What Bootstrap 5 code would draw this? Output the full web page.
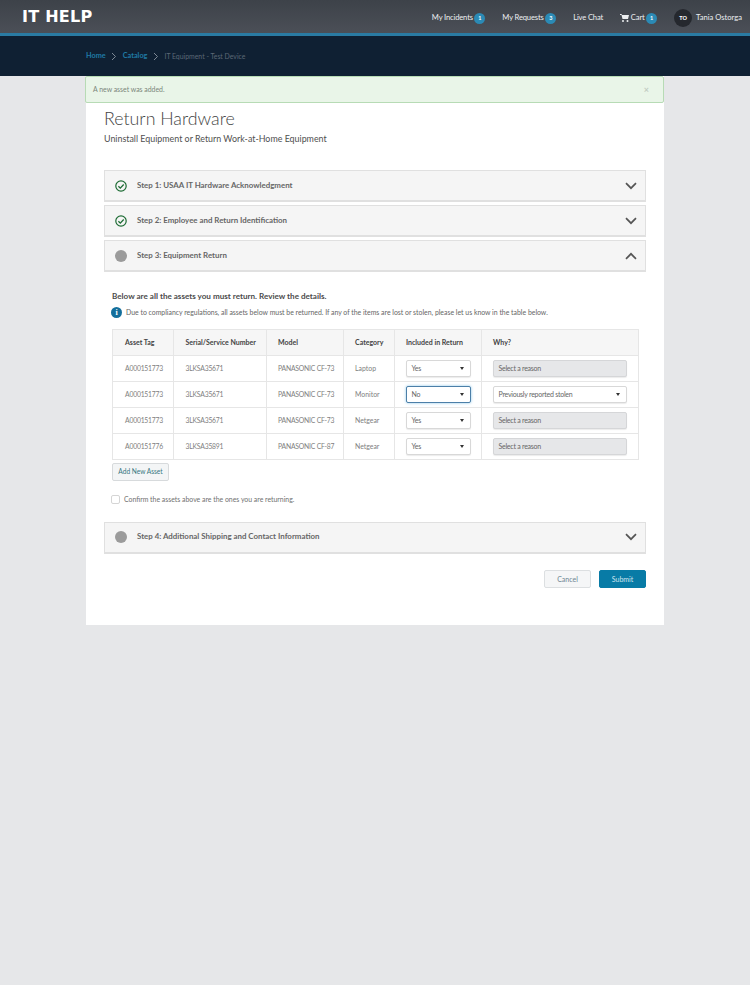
<!DOCTYPE html>
<html lang="en"><head><meta charset="utf-8"><title>Return Hardware</title>
<link href="https://cdn.jsdelivr.net/npm/bootstrap@5.3.0/dist/css/bootstrap.min.css" rel="stylesheet">
<style>
body{background:#e6e7e9;font-family:Lato,"Noto Sans",sans-serif;color:#555;font-size:8px;min-height:985px}
.topbar{height:36px;background:linear-gradient(#3d4249,#4b4f57);border-bottom:3px solid #2a7ba3;padding:0 8px 0 22px}
.brand{font-family:"DejaVu Sans",sans-serif;font-weight:700;font-size:15px;letter-spacing:.2px;color:#fff;transform:scaleX(1.07);transform-origin:left;line-height:1;margin-top:1px}
.navgroup{gap:17px;padding-top:3px}
.toplink{color:#eceef0;font-size:7.6px;white-space:nowrap;text-decoration:none;letter-spacing:-.15px}
.username{letter-spacing:0}
.count{display:inline-flex;align-items:center;justify-content:center;width:11px;height:11px;border-radius:50%;background:#2b8ab5;color:#fff;font-size:5.5px;font-weight:700;margin-left:1.5px;vertical-align:middle}
.avatar{width:18px;height:18px;border-radius:50%;background:#25282e;color:#fff;font-size:5.5px;font-weight:900}
.crumbbar{height:40px;background:#0f2033;padding-left:86px;font-size:6.9px;color:#5b6875}
.crumbbar a{color:#1f7aa5;font-weight:700;text-decoration:none;font-size:7.3px}
.crumbsvg{width:6px;height:9px;margin:0 5.5px}
.sheet{width:578px;margin:0 auto 0 86px;background:#fff;height:549px;position:relative}
.notice{position:absolute;left:-1px;top:0;width:579px;height:27px;background:#e9f5e8;border:1px solid #b7dbb5;border-radius:2px;padding:0 14px 0 7px;font-size:6.9px;color:#7b857b}
.notice-x{color:#c2ccc2;font-size:9px;font-weight:700;line-height:1}
.sheetbody{padding:31px 18px 0 18px}
.title{font-size:17.8px;font-weight:300;color:#444;margin:0;line-height:22px}
.subtitle{font-size:8.9px;color:#4f4f4f;margin:3px 0 24px;line-height:14px}
.step{height:32px;background:#f5f5f5;border:1px solid #e0e0e0;border-bottom-width:2px;margin-bottom:3px;padding:0 8px 0 10px}
.step-t{font-size:7.9px;font-weight:700;color:#666;margin-left:10px}
.dot{width:12px;height:12px;border-radius:50%;background:#9b9b9b;flex:none}
.stepsvg{width:12px;height:12px;flex:none}
.chev{width:12px;height:8px;margin-left:auto}
.panelbody{padding:15px 8px 0 8px}
.lede{font-size:8.1px;font-weight:700;color:#4b4b4b;line-height:12px;margin-bottom:5px}
.infoline{font-size:6.9px;color:#666;gap:4px;margin-bottom:11px;margin-left:-1px;line-height:11px}
.info{width:11px;height:11px;border-radius:50%;background:#146f9c;color:#fff;font:700 8px/11px "Liberation Serif",serif;text-align:center;flex:none}
.assets{width:526px;table-layout:fixed;margin:0;font-size:6.8px;letter-spacing:-.2px;border-color:#e6e6e6}
.assets th{background:#f6f6f6;color:#444;font-weight:700;height:26px;padding:0 0 0 12px;vertical-align:middle;font-size:7px;letter-spacing:0}
.assets td{height:26px;padding:0 0 0 12px;vertical-align:middle;background:#fff;color:#808080;white-space:nowrap}
.assets td.pad11,.assets th.pad11{padding-left:11px}
.assets td.wide{font-size:6.9px;letter-spacing:0}
.picker{height:16.5px;background:#fff;border:1px solid #d8d8d8;border-radius:2px;font-size:7px;letter-spacing:-.25px;color:#666;padding:0 6px 0 4.5px;box-shadow:0 1px 1px rgba(0,0,0,.08)}
.picker.sel{border-color:#4c7fa8;box-shadow:0 0 3px #8cc6e8}
.picker.off{background:#e6e7e9;border-color:#d5d6d8}
.caret{width:0;height:0;border:2.5px solid transparent;border-top:3.5px solid #333;border-bottom:0}
.w-inc{width:65px}.w-why{width:134px}
.addbtn{display:block;height:18px;width:57px;font-size:6.6px;color:#37767f;background:#f3f5f6;border:1px solid #d7dadc;border-radius:2px;margin-top:3px;padding:0}
.confirm{font-size:6.9px;color:#707070;gap:4px;margin:13px 0 17.5px -1px}
.box{width:9px;height:9px;border:1px solid #d5d5d5;border-radius:2px;background:#fff}
.actions{gap:8px;margin-top:16px}
.btn-quiet,.btn-go{height:18px;font-size:7px;border-radius:2px;padding:0}
.btn-quiet{width:47px;background:#f5f6f7;border:1px solid #dcdfe1;color:#6e8592}
.btn-go{width:47px;background:#087ba6;border:1px solid #087ba6;color:#cfe6ef}
</style></head><body>
<header class="topbar d-flex align-items-center justify-content-between">
  <div class="brand">IT HELP</div>
  <nav class="d-flex align-items-center navgroup">
    <a class="toplink" href="#">My Incidents<span class="count">1</span></a>
    <a class="toplink" href="#">My Requests<span class="count">3</span></a>
    <a class="toplink" href="#">Live Chat</a>
    <a class="toplink" href="#"><svg width="9" height="8" viewBox="0 0 18 16" fill="#eceef0"><path d="M0 0h3l1 2h14l-2 8H5L3 2H0zM6 12a2 2 0 1 1 0 4 2 2 0 0 1 0-4zm9 0a2 2 0 1 1 0 4 2 2 0 0 1 0-4z"/></svg> Cart<span class="count">1</span></a>
    <div class="d-flex align-items-center toplink username"><span class="avatar d-flex align-items-center justify-content-center">TO</span><span class="ms-1">Tania Ostorga</span></div>
  </nav>
</header>
<div class="crumbbar d-flex align-items-center">
  <a href="#">Home</a>
  <svg class="crumbsvg" viewBox="0 0 6 9" fill="none" stroke="#7d8894" stroke-width="1"><path d="M1 1l3.5 3.5L1 8"/></svg>
  <a href="#">Catalog</a>
  <svg class="crumbsvg" viewBox="0 0 6 9" fill="none" stroke="#7d8894" stroke-width="1"><path d="M1 1l3.5 3.5L1 8"/></svg>
  <span>IT Equipment - Test Device</span>
</div>
<main class="sheet">
  <div class="notice d-flex align-items-center justify-content-between"><span>A new asset was added.</span><span class="notice-x">×</span></div>
  <div class="sheetbody">
    <h1 class="title">Return Hardware</h1>
    <p class="subtitle">Uninstall Equipment or Return Work-at-Home Equipment</p>

    <div class="step d-flex align-items-center">
      <svg class="stepsvg" viewBox="0 0 12 12" fill="none" stroke="#1c6b33"><circle cx="6" cy="6" r="5.2" stroke-width="1.2"/><path d="M3.4 6.2l1.9 1.9 3.4-3.6" stroke-width="1.3"/></svg>
      <span class="step-t">Step 1: USAA IT Hardware Acknowledgment</span>
      <svg class="chev" viewBox="0 0 12 8" fill="none" stroke="#555" stroke-width="1.7"><path d="M1 1.2l5 5 5-5"/></svg>
    </div>
    <div class="step d-flex align-items-center">
      <svg class="stepsvg" viewBox="0 0 12 12" fill="none" stroke="#1c6b33"><circle cx="6" cy="6" r="5.2" stroke-width="1.2"/><path d="M3.4 6.2l1.9 1.9 3.4-3.6" stroke-width="1.3"/></svg>
      <span class="step-t">Step 2: Employee and Return Identification</span>
      <svg class="chev" viewBox="0 0 12 8" fill="none" stroke="#555" stroke-width="1.7"><path d="M1 1.2l5 5 5-5"/></svg>
    </div>
    <div class="step d-flex align-items-center">
      <span class="dot"></span>
      <span class="step-t">Step 3: Equipment Return</span>
      <svg class="chev" viewBox="0 0 12 8" fill="none" stroke="#555" stroke-width="1.7"><path d="M1 6.8l5-5 5 5"/></svg>
    </div>

    <div class="panelbody">
      <div class="lede">Below are all the assets you must return. Review the details.</div>
      <div class="infoline d-flex align-items-center"><span class="info">i</span><span>Due to compliancy regulations, all assets below must be returned. If any of the items are lost or stolen, please let us know in the table below.</span></div>
      <table class="table table-bordered assets">
        <colgroup><col style="width:60.5px"><col style="width:93.5px"><col style="width:77px"><col style="width:51px"><col style="width:87px"><col style="width:157px"></colgroup>
        <thead><tr><th>Asset Tag</th><th>Serial/Service Number</th><th class="pad11">Model</th><th class="pad11">Category</th><th class="pad11">Included in Return</th><th class="pad11">Why?</th></tr></thead>
        <tbody>
          <tr><td>A000151773</td><td>3LKSA35671</td><td class="pad11">PANASONIC CF-73</td><td class="pad11 wide">Laptop</td><td class="pad11"><div class="picker w-inc d-flex align-items-center justify-content-between"><span>Yes</span><i class="caret"></i></div></td><td class="pad11"><div class="picker off w-why d-flex align-items-center"><span>Select a reason</span></div></td></tr>
          <tr><td>A000151773</td><td>3LKSA35671</td><td class="pad11">PANASONIC CF-73</td><td class="pad11 wide">Monitor</td><td class="pad11"><div class="picker sel w-inc d-flex align-items-center justify-content-between"><span>No</span><i class="caret"></i></div></td><td class="pad11"><div class="picker w-why d-flex align-items-center justify-content-between"><span>Previously reported stolen</span><i class="caret"></i></div></td></tr>
          <tr><td>A000151773</td><td>3LKSA35671</td><td class="pad11">PANASONIC CF-73</td><td class="pad11 wide">Netgear</td><td class="pad11"><div class="picker w-inc d-flex align-items-center justify-content-between"><span>Yes</span><i class="caret"></i></div></td><td class="pad11"><div class="picker off w-why d-flex align-items-center"><span>Select a reason</span></div></td></tr>
          <tr><td>A000151776</td><td>3LKSA35891</td><td class="pad11">PANASONIC CF-87</td><td class="pad11 wide">Netgear</td><td class="pad11"><div class="picker w-inc d-flex align-items-center justify-content-between"><span>Yes</span><i class="caret"></i></div></td><td class="pad11"><div class="picker off w-why d-flex align-items-center"><span>Select a reason</span></div></td></tr>
        </tbody>
      </table>
      <button class="btn addbtn" type="button">Add New Asset</button>
      <div class="confirm d-flex align-items-center"><span class="box"></span><span>Confirm the assets above are the ones you are returning.</span></div>
    </div>

    <div class="step d-flex align-items-center">
      <span class="dot"></span>
      <span class="step-t">Step 4: Additional Shipping and Contact Information</span>
      <svg class="chev" viewBox="0 0 12 8" fill="none" stroke="#555" stroke-width="1.7"><path d="M1 1.2l5 5 5-5"/></svg>
    </div>
    <div class="actions d-flex justify-content-end">
      <button class="btn btn-quiet" type="button">Cancel</button>
      <button class="btn btn-go" type="button">Submit</button>
    </div>
  </div>
</main>
<script src="https://cdn.jsdelivr.net/npm/bootstrap@5.3.0/dist/js/bootstrap.bundle.min.js"></script>
</body></html>
